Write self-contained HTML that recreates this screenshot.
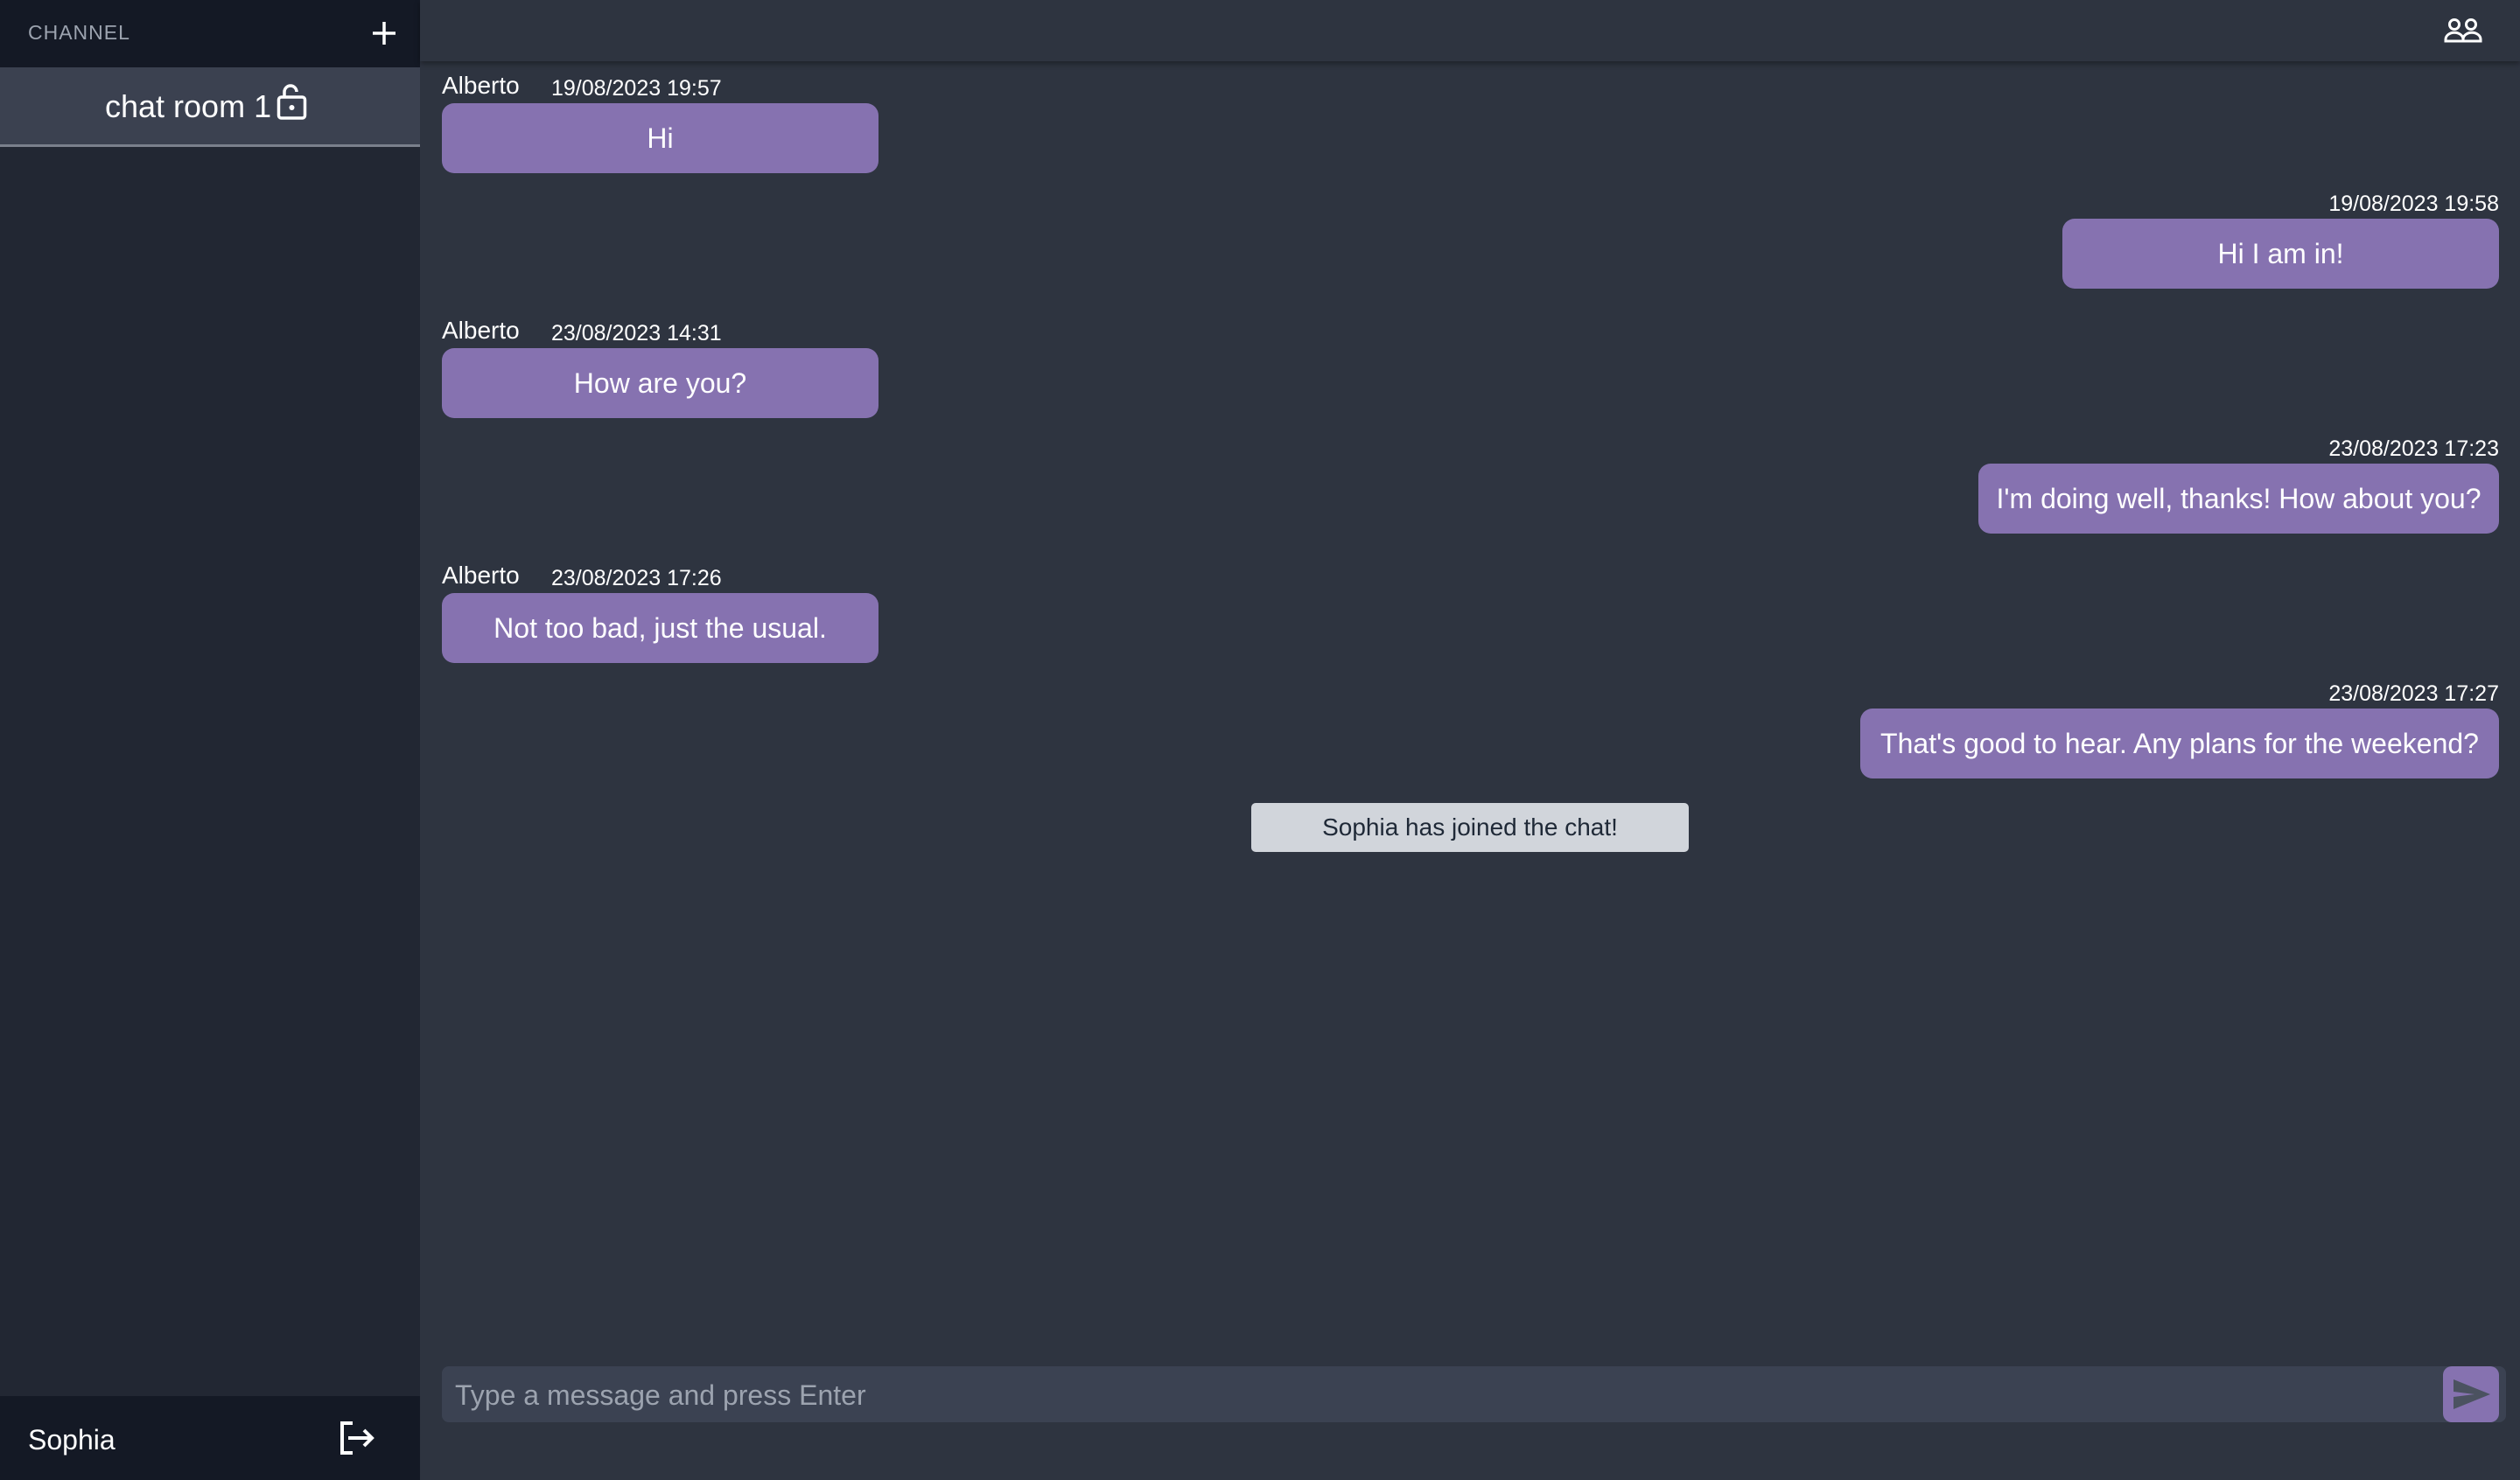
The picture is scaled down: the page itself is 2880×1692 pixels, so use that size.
<!DOCTYPE html>
<html><head><meta charset="utf-8"><style>
*{box-sizing:border-box;margin:0;padding:0}
body{width:2880px;height:1692px;overflow:hidden;background:#2e3440;font-family:"Liberation Sans",sans-serif;position:relative;color:#fff}
.abs{position:absolute}
.side{left:0;top:0;width:480px;height:1692px;background:#222733}
.sidetop{left:0;top:0;width:480px;height:77px;background:#141925}
.room{left:0;top:77px;width:480px;height:91px;background:#3b4150;border-bottom:3px solid #7a808c}
.bottom{left:0;top:1596px;width:480px;height:96px;background:#141925}
.header{left:480px;top:0;width:2400px;height:70px;background:#2e3440;box-shadow:0 3px 6px rgba(0,0,0,.35)}
.b{background:#8672b0;border-radius:14px;color:#fff;font-size:32px;display:flex;align-items:center;justify-content:center;white-space:nowrap;height:80px}
.name{font-size:28px;color:#fff}
.ts{font-size:25px;color:#fff}
</style></head><body>
<div class="abs side"></div>
<div class="abs sidetop"></div>
<div class="abs" style="left:32px;top:24px;font-size:23px;color:#9ca3af;letter-spacing:1px">CHANNEL</div>
<svg class="abs" style="left:423px;top:22px" width="32" height="32" viewBox="0 0 32 32"><path d="M16 3V29M3 16H29" stroke="#fff" stroke-width="3.5"/></svg>
<div class="abs room"></div>
<div class="abs" style="left:120px;top:101px;font-size:36px;color:#fff">chat room 1</div>
<svg class="abs" style="left:313px;top:95px" width="40" height="44" viewBox="0 0 40 44"><path d="M12 15V10a7 7 0 0 1 14 0" fill="none" stroke="#fff" stroke-width="3.5"/><rect x="5.5" y="16" width="30" height="24" rx="3" fill="none" stroke="#fff" stroke-width="3.5"/><circle cx="20.5" cy="28" r="3" fill="#fff"/></svg>
<div class="abs bottom"></div>
<div class="abs" style="left:32px;top:1628px;font-size:32px">Sophia</div>
<svg class="abs" style="left:385px;top:1622px" width="48" height="44" viewBox="0 0 48 44"><path d="M18 5H6V39H18" fill="none" stroke="#fff" stroke-width="4"/><path d="M13 22H40M31 13L40 22L31 31" fill="none" stroke="#fff" stroke-width="4"/></svg>
<div class="abs header"></div>
<svg class="abs" style="left:2792px;top:20px" width="48" height="30" viewBox="0 0 48 30"><circle cx="13" cy="8" r="5.5" fill="none" stroke="#fff" stroke-width="3"/><circle cx="32" cy="8" r="5.5" fill="none" stroke="#fff" stroke-width="3"/><path d="M3 27V25a9 7 0 0 1 20 0V27ZM23 27V25a9 7 0 0 1 20 0V27Z" fill="none" stroke="#fff" stroke-width="3"/></svg>

<div class="abs name" style="left:505px;top:82px">Alberto</div>
<div class="abs ts" style="left:630px;top:87px">19/08/2023 19:57</div>
<div class="abs b" style="left:505px;top:118px;width:499px">Hi</div>

<div class="abs ts" style="right:24px;top:219px">19/08/2023 19:58</div>
<div class="abs b" style="left:2357px;top:250px;width:499px">Hi I am in!</div>

<div class="abs name" style="left:505px;top:362px">Alberto</div>
<div class="abs ts" style="left:630px;top:367px">23/08/2023 14:31</div>
<div class="abs b" style="left:505px;top:398px;width:499px">How are you?</div>

<div class="abs ts" style="right:24px;top:499px">23/08/2023 17:23</div>
<div class="abs b" style="left:2261px;top:530px;width:595px">I'm doing well, thanks! How about you?</div>

<div class="abs name" style="left:505px;top:642px">Alberto</div>
<div class="abs ts" style="left:630px;top:647px">23/08/2023 17:26</div>
<div class="abs b" style="left:505px;top:678px;width:499px">Not too bad, just the usual.</div>

<div class="abs ts" style="right:24px;top:779px">23/08/2023 17:27</div>
<div class="abs b" style="left:2126px;top:810px;width:730px">That's good to hear. Any plans for the weekend?</div>

<div class="abs" style="left:1430px;top:918px;width:500px;height:56px;background:#d1d5db;border-radius:5px;color:#1f2937;font-size:28px;display:flex;align-items:center;justify-content:center">Sophia has joined the chat!</div>

<div class="abs" style="left:505px;top:1562px;width:2359px;height:64px;background:#3b4252;border-radius:8px"></div>
<div class="abs" style="left:520px;top:1577px;font-size:32px;color:#9ca3af">Type a message and press Enter</div>
<div class="abs" style="left:2792px;top:1562px;width:64px;height:64px;background:#8672b0;border-radius:10px"></div>
<svg class="abs" style="left:2800px;top:1574px" width="50" height="40" viewBox="0 0 50 40"><path d="M4 3L46 20L4 37L4 23L28 20L4 17Z" fill="#4b5260"/></svg>
</body></html>
